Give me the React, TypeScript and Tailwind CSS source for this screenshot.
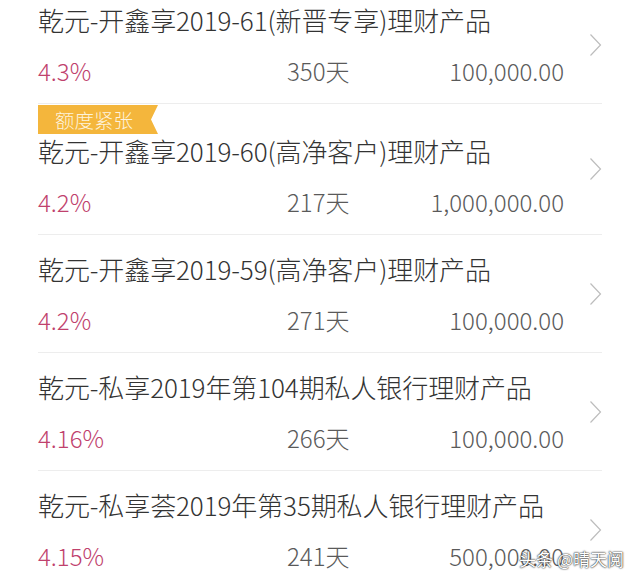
import React from "react";

type Product = {
  name: string;
  rate: string;
  days: string;
  amount: string;
  tag?: string;
};

const products: Product[] = [
  { name: "乾元-开鑫享2019-61(新晋专享)理财产品", rate: "4.3%", days: "350天", amount: "100,000.00" },
  { name: "乾元-开鑫享2019-60(高净客户)理财产品", rate: "4.2%", days: "217天", amount: "1,000,000.00", tag: "额度紧张" },
  { name: "乾元-开鑫享2019-59(高净客户)理财产品", rate: "4.2%", days: "271天", amount: "100,000.00" },
  { name: "乾元-私享2019年第104期私人银行理财产品", rate: "4.16%", days: "266天", amount: "100,000.00" },
  { name: "乾元-私享荟2019年第35期私人银行理财产品", rate: "4.15%", days: "241天", amount: "500,000.00" },
];

const Chevron = () => (
  <svg width="13" height="24" viewBox="0 0 13 24" fill="none" className="shrink-0">
    <path d="M1.5 1.5 L11.5 12 L1.5 22.5" stroke="#bdbdbd" strokeWidth="1.2" />
  </svg>
);

const Row = ({ p }: { p: Product }) => {
  return (
    <div className="flex items-center border-b border-[#ededed]">
      <div className="flex-1 flex flex-col">
        {p.tag ? (
          <div className="mt-px h-[29px] w-[120px] bg-[#f4b63c] pl-[17px] text-[19.5px] leading-[29px] text-[#fdf3dc] [clip-path:polygon(0_0,100%_0,calc(100%-7px)_50%,100%_100%,0_100%)]">
            {p.tag}
          </div>
        ) : (
          <div className="h-[17px]" />
        )}
        <div className="text-[26px] leading-[34px] text-[#333333] whitespace-nowrap tracking-[-0.1px]">{p.name}</div>
        <div className="mt-[18px] mb-[16px] flex items-center text-[24px] leading-[32px]">
          <span className="w-[249px] text-[#c0416d]">{p.rate}</span>
          <span className="w-[100px] text-[#5a5a5a]">{p.days}</span>
          <span className="w-[177px] text-right text-[#5a5a5a]">{p.amount}</span>
        </div>
      </div>
      <Chevron />
    </div>
  );
};

export default function App() {
  return (
    <div
      className="w-[640px] h-[582px] overflow-hidden bg-white relative font-light"
      style={{ fontFamily: '"Noto Sans CJK SC", "Noto Sans", sans-serif' }}
    >
      <div className="-mt-[14px] ml-[38px] mr-[38px]">
        {products.map((p) => (
          <Row key={p.name} p={p} />
        ))}
      </div>

      {/* watermark */}
      <div className="absolute right-[16px] bottom-[13px] text-[17px] leading-[20px] font-normal text-white [text-shadow:0_0_2px_#222,0_0_1px_#222]">
        头条 @晴天阅
      </div>
    </div>
  );
}
